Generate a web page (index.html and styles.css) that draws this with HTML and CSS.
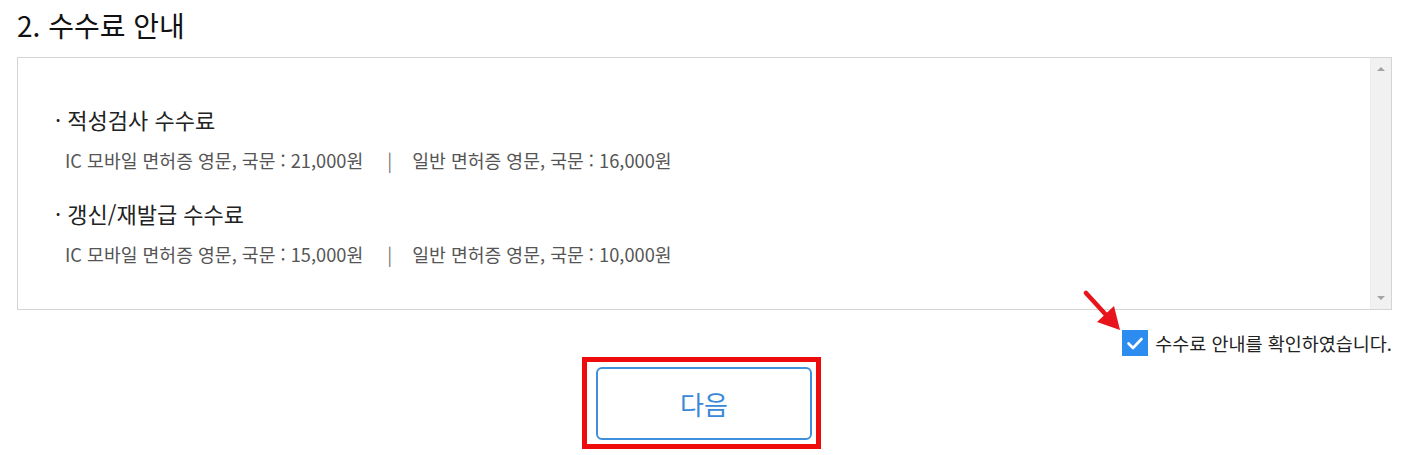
FILE: index.html
```html
<!DOCTYPE html>
<html lang="ko">
<head>
<meta charset="utf-8">
<link rel="stylesheet" href="styles.css">
</head>
<body>
<div class="page">
  <h2 class="title">2. 수수료 안내</h2>
  <div class="box">
    <div class="content">
      <p class="item-head">· 적성검사 수수료</p>
      <p class="item-sub">IC 모바일 면허증 영문, 국문 : 21,000원<span class="sep">|</span>일반 면허증 영문, 국문 : 16,000원</p>
      <p class="item-head second">· 갱신/재발급 수수료</p>
      <p class="item-sub">IC 모바일 면허증 영문, 국문 : 15,000원<span class="sep">|</span>일반 면허증 영문, 국문 : 10,000원</p>
    </div>
    <div class="scrollbar">
      <span class="arrow-up"></span>
      <span class="arrow-down"></span>
    </div>
  </div>
  <div class="check-row">
    <span class="checkbox">
      <svg viewBox="0 0 26 26" width="26" height="26"><path d="M6.5 13.5 L11 18 L19.5 9" fill="none" stroke="#fff" stroke-width="2.6" stroke-linecap="round" stroke-linejoin="round"/></svg>
    </span>
    <span class="check-label">수수료 안내를 확인하였습니다.</span>
    <svg class="annot-arrow" viewBox="0 0 40 42" width="40" height="42">
      <line x1="3" y1="3" x2="25" y2="27" stroke="#e8141b" stroke-width="4.5" stroke-linecap="round"/>
      <polygon points="37,40 14,32 31,16" fill="#e8141b"/>
    </svg>
  </div>
  <div class="btn-row">
    <div class="highlight">
      <button class="next-btn">다음</button>
    </div>
  </div>
</div>
</body>
</html>
```
FILE: styles.css
```css
* { box-sizing: border-box; }
html, body { margin: 0; padding: 0; background: #fff; }
body { font-family: "Noto Sans CJK KR", "Noto Sans", sans-serif; color: #222; }
.page { width: 1405px; padding: 6px 13px 0 17px; }
.title {
  margin: 0;
  font-size: 28px;
  line-height: 38px;
  font-weight: 400;
  color: #111;
}
.box {
  margin-top: 13px;
  height: 253px;
  border: 1px solid #d4d4d4;
  display: flex;
}
.content { flex: 1; padding: 45px 0 0 37px; }
.item-head {
  margin: 0;
  font-size: 22px;
  line-height: 32px;
  color: #222;
}
.item-head.second { margin-top: 23px; }
.item-sub {
  margin: 11px 0 0 10px;
  font-size: 18.25px;
  line-height: 28px;
  color: #555;
}
.sep { margin: 0 20px 0 24px; color: #777; }
.scrollbar {
  width: 21px;
  background: #f1f1f1;
  border-left: 1px solid #ececec;
  display: flex;
  flex-direction: column;
  justify-content: space-between;
  align-items: center;
  padding: 9px 0 9px;
}
.arrow-up, .arrow-down { width: 0; height: 0; border-left: 4px solid transparent; border-right: 4px solid transparent; }
.arrow-up { border-bottom: 4px solid #a3a3a3; }
.arrow-down { border-top: 4px solid #a3a3a3; }
.check-row {
  position: relative;
  margin-top: 20px;
  height: 26px;
  display: flex;
  justify-content: flex-end;
  align-items: center;
  gap: 7px;
}
.checkbox {
  width: 26px; height: 26px;
  background: #2d8cf0;
  display: flex;
}
.check-label { font-size: 18.5px; line-height: 26px; color: #222; }
.annot-arrow { position: absolute; left: 1066px; top: -40px; }
.btn-row { margin-top: 1px; display: flex; justify-content: center; padding-right: 6px; }
.highlight {
  border: 5px solid #ee0b0b;
  padding: 5px 4px 4px 9px;
}
.next-btn {
  display: block;
  width: 216px;
  height: 73px;
  border: 2px solid #3e8fdc;
  border-radius: 6px;
  background: #fff;
  color: #3a89d8;
  font-family: "Noto Sans CJK KR", "Noto Sans", sans-serif;
  font-size: 26px;
  padding: 0;
}
```
